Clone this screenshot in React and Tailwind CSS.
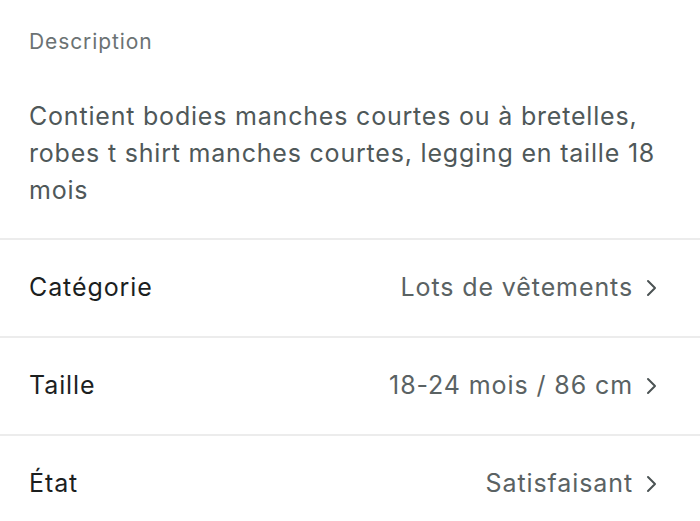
import React from 'react';

const rows = [
  { label: 'Catégorie', value: 'Lots de vêtements' },
  { label: 'Taille', value: '18-24 mois / 86 cm' },
  { label: 'État', value: 'Satisfaisant' },
];

function Chevron() {
  return (
    <svg width="13" height="18" viewBox="0 0 13 18" fill="none" className="ml-[12px] shrink-0">
      <path d="M3 2l7 7-7 7" stroke="#4b5354" strokeWidth="2" strokeLinecap="round" strokeLinejoin="round" />
    </svg>
  );
}

export default function App() {
  return (
    <div className="w-[700px] h-[521px] bg-white overflow-hidden" style={{ fontFamily: 'Inter, "Noto Sans", sans-serif' }}>
      {/* Description block */}
      <div className="px-[29px] pt-[28px] pb-[29px] border-b-2 border-[#ececec]">
        <p className="text-[21px] leading-[28px] tracking-[0.9px] text-[#6b7273]">Description</p>
        <p className="mt-[42px] text-[25px] leading-[37px] tracking-[0.8px] text-[#4f5859]">
          Contient bodies manches courtes ou à bretelles, robes t shirt manches courtes, legging en taille 18 mois
        </p>
      </div>

      {rows.map((row) => (
        <div
          key={row.label}
          className="flex items-center justify-between h-[98px] pl-[29px] pr-[42px] border-b-2 border-[#ececec]"
        >
          <span className="text-[25px] tracking-[0.9px] text-[#1c1f1f]">{row.label}</span>
          <div className="flex items-center">
            <span className="text-[25px] tracking-[0.9px] text-[#5a6263]">{row.value}</span>
            <Chevron />
          </div>
        </div>
      ))}
    </div>
  );
}
